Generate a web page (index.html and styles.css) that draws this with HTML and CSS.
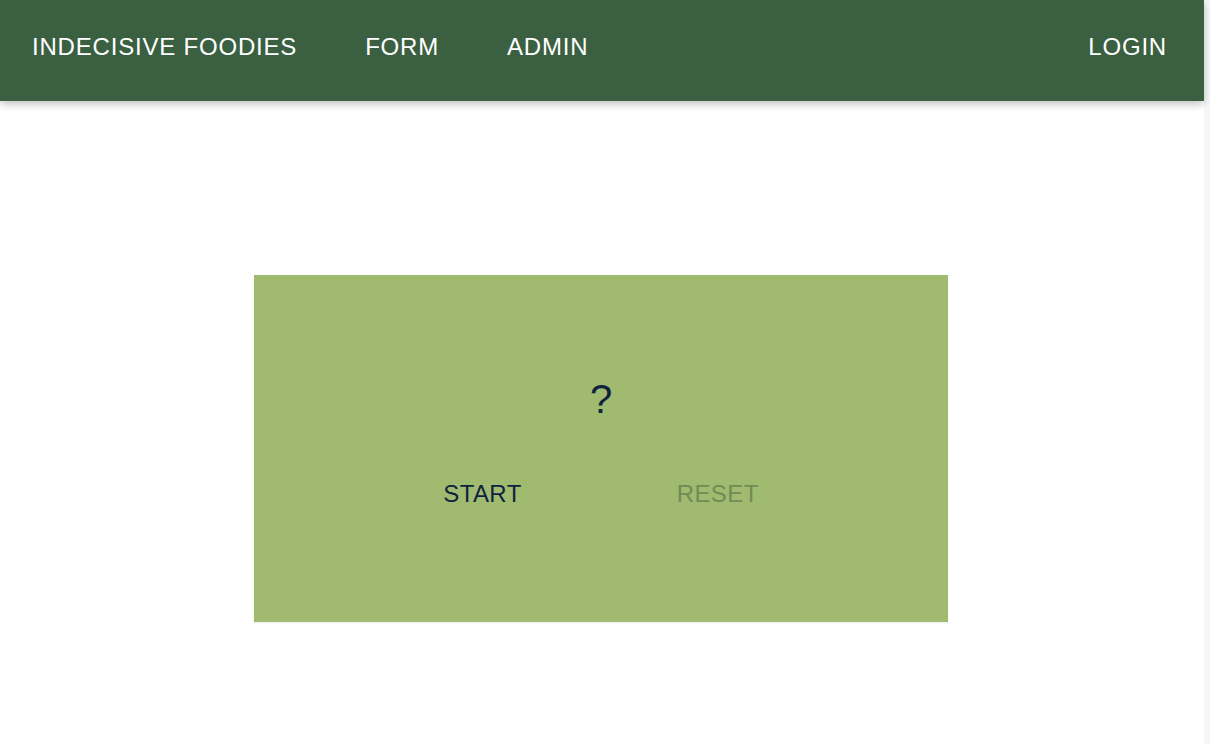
FILE: index.html
```html
<!DOCTYPE html>
<html>
<head>
<meta charset="utf-8">
<link rel="stylesheet" href="styles.css">
</head>
<body>
<div class="page">
  <header class="topbar">
    <nav class="nav-left">
      <a class="nav-link">INDECISIVE FOODIES</a>
      <a class="nav-link">FORM</a>
      <a class="nav-link">ADMIN</a>
    </nav>
    <a class="nav-link">LOGIN</a>
  </header>
  <main class="content">
    <section class="card">
      <div class="result">?</div>
      <div class="actions">
        <button class="btn btn-start">START</button>
        <button class="btn btn-reset" disabled>RESET</button>
      </div>
    </section>
  </main>
</div>
</body>
</html>
```
FILE: styles.css
```css
html {
  background: #f6f7f9;
}
body {
  margin: 0;
  font-family: "Liberation Sans", Arial, sans-serif;
}
.page {
  width: 1204px;
  min-height: 744px;
  background: #ffffff;
}
.topbar {
  height: 101px;
  background: #3b5f41;
  display: flex;
  align-items: center;
  justify-content: space-between;
  padding: 0 37px 8px 32px;
  box-sizing: border-box;
  box-shadow: 0 3px 8px rgba(0, 0, 0, 0.25);
  position: relative;
}
.nav-left {
  display: flex;
  gap: 68px;
}
.nav-link {
  color: #ffffff;
  font-size: 24px;
  letter-spacing: 0.8px;
  text-decoration: none;
}
.content {
  padding-top: 174px;
  padding-right: 2px;
  display: flex;
  justify-content: center;
}
.card {
  width: 694px;
  height: 347px;
  background: #a0ba6f;
  box-shadow: 0 1px 2px rgba(0, 0, 0, 0.08);
  display: flex;
  flex-direction: column;
  align-items: center;
  padding-top: 101px;
  box-sizing: border-box;
}
.result {
  font-size: 40px;
  line-height: 46px;
  color: #0f2340;
}
.actions {
  margin-top: 58px;
  display: flex;
  gap: 155px;
}
.btn {
  background: none;
  border: none;
  padding: 0;
  font-family: "Liberation Sans", Arial, sans-serif;
  font-size: 24px;
  letter-spacing: 0.4px;
  line-height: 28px;
}
.btn-start {
  color: #0f2340;
}
.btn-reset {
  color: #6f8c57;
}
```
